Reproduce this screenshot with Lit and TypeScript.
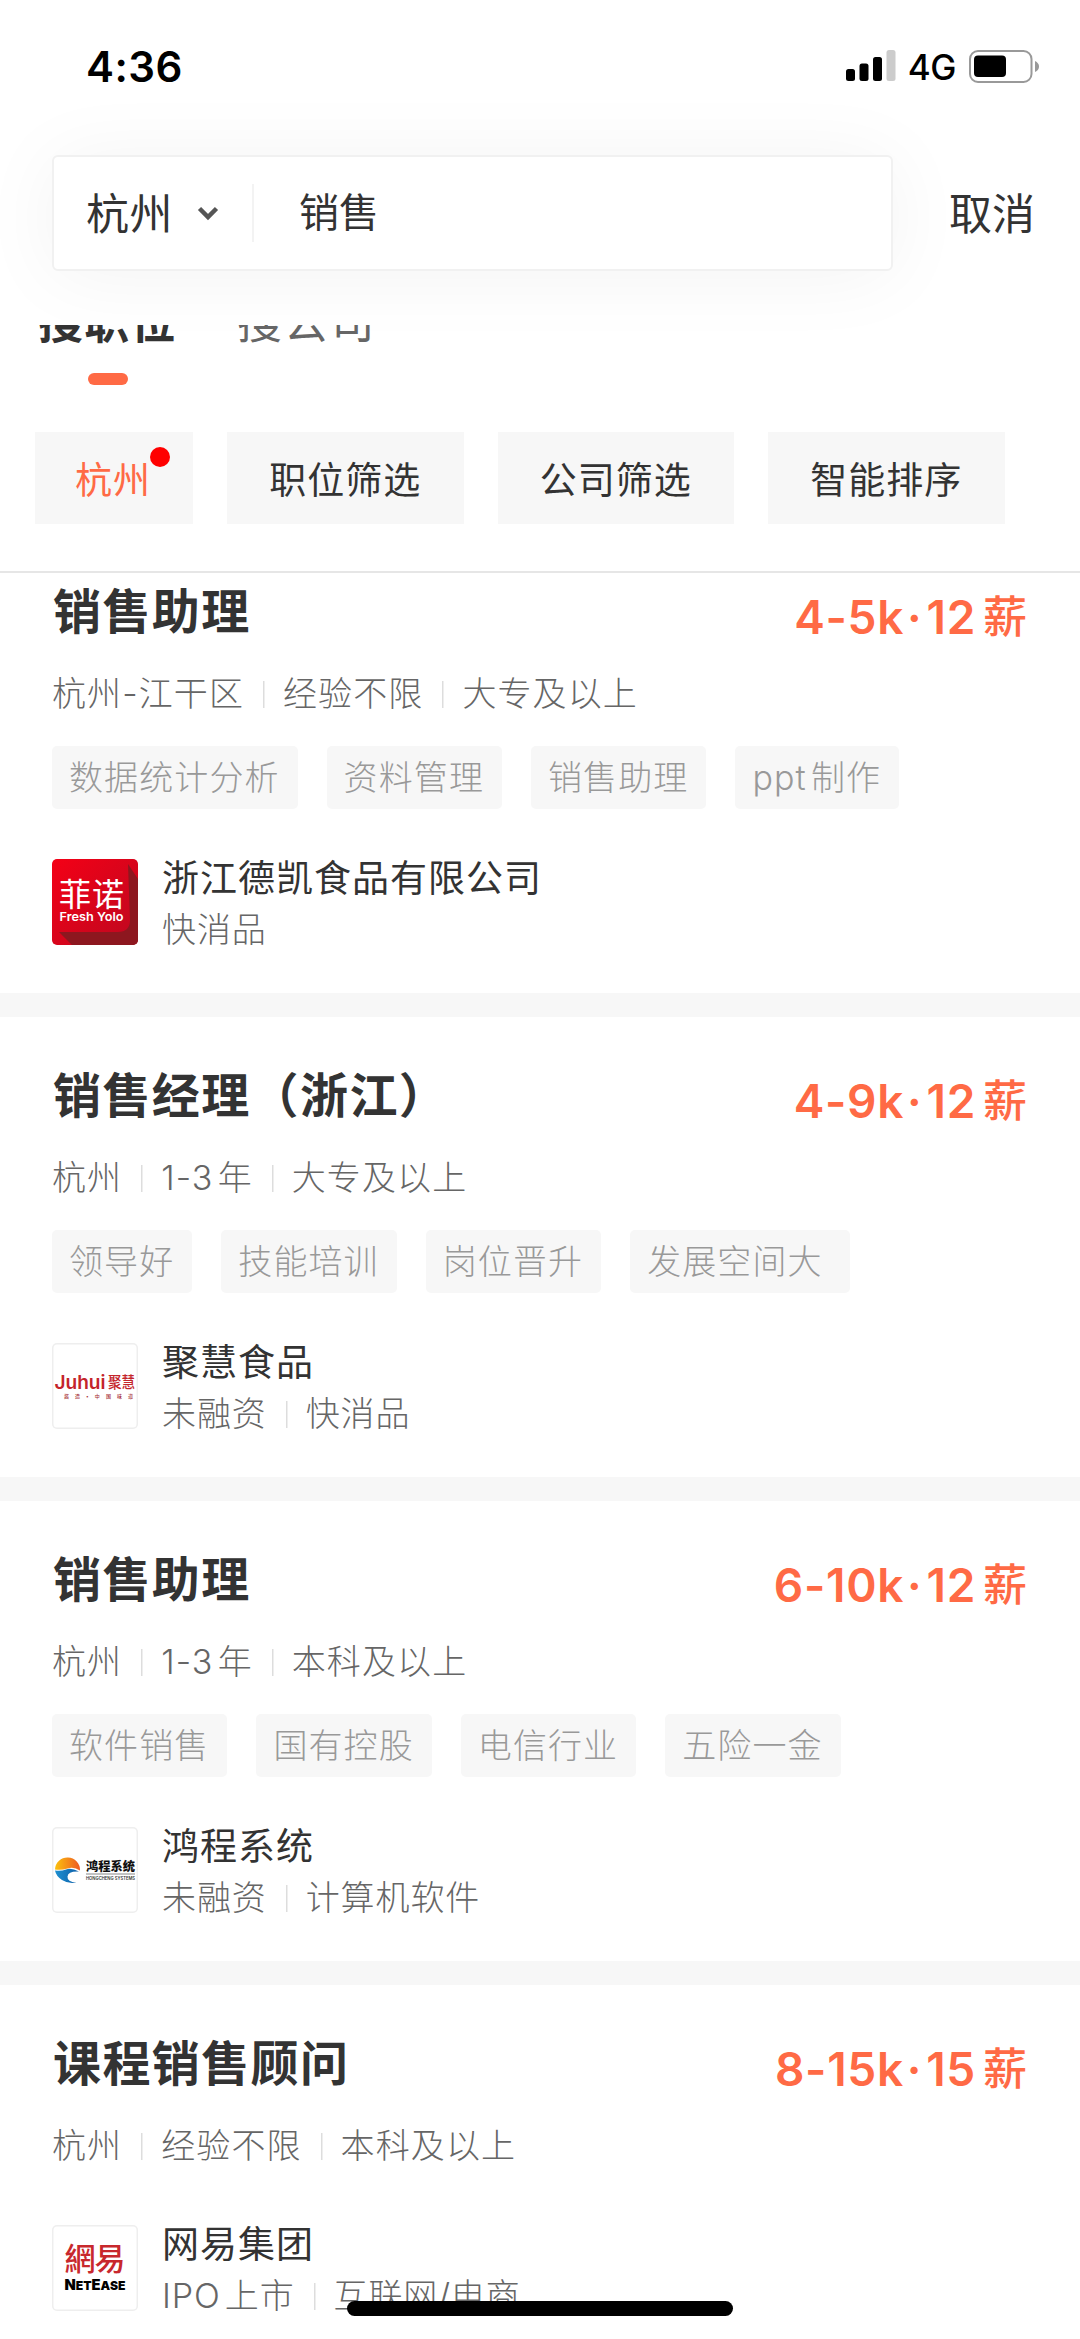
import { LitElement, html, css, svg, nothing } from "lit";
import { customElement, property } from "lit/decorators.js";

interface Job {
  title: string;
  pay: string;
  months: string;
  meta: string[];
  tags: string[];
  company: string;
  info: string[];
  logo: "fresh" | "juhui" | "hongcheng" | "netease";
}

const JOBS: Job[] = [
  { title: "销售助理", pay: "4-5k", months: "12", meta: ["杭州-江干区", "经验不限", "大专及以上"], tags: ["数据统计分析", "资料管理", "销售助理", "ppt 制作"], company: "浙江德凯食品有限公司", info: ["快消品"], logo: "fresh" },
  { title: "销售经理（浙江）", pay: "4-9k", months: "12", meta: ["杭州", "1-3 年", "大专及以上"], tags: ["领导好", "技能培训", "岗位晋升", "发展空间大"], company: "聚慧食品", info: ["未融资", "快消品"], logo: "juhui" },
  { title: "销售助理", pay: "6-10k", months: "12", meta: ["杭州", "1-3 年", "本科及以上"], tags: ["软件销售", "国有控股", "电信行业", "五险一金"], company: "鸿程系统", info: ["未融资", "计算机软件"], logo: "hongcheng" },
  { title: "课程销售顾问", pay: "8-15k", months: "15", meta: ["杭州", "经验不限", "本科及以上"], tags: [], company: "网易集团", info: ["IPO 上市", "互联网/电商"], logo: "netease" },
];

const LOGOS = {
  fresh: svg`
    <defs><linearGradient id="red" x1="0" y1="0" x2="1" y2="1"><stop offset="0" stop-color="#f40016"/><stop offset="1" stop-color="#bd0820"/></linearGradient></defs>
    <rect width="86" height="86" rx="4" fill="url(#red)"/>
    <path d="M76 5 86 20V82a4 4 0 0 1-4 4H20L7 73H66q12 0 12-12Z" fill="#8d171f"/>
    <text x="7" y="46.500" font-size="32" textLength="65" fill="#fff">菲诺</text>
    <text x="7.500" y="61.500" font-size="12" font-weight="600" textLength="64" lengthAdjust="spacingAndGlyphs" fill="#fff">Fresh Yolo</text>`,
  juhui: svg`
    <text x="2.500" y="45.500" font-size="18.500" font-weight="600" textLength="51" lengthAdjust="spacingAndGlyphs" fill="#c4242b">Juhui</text>
    <text x="56" y="45" font-size="15.500" font-weight="500" textLength="27" lengthAdjust="spacingAndGlyphs" fill="#c4242b">聚慧</text>
    <text x="12" y="54.500" font-size="5" font-weight="500" textLength="69" fill="#a8323a">酱造•中国味道</text>`,
  hongcheng: svg`
    <defs><linearGradient id="sun"><stop offset="0" stop-color="#fbc10d"/><stop offset="1" stop-color="#ee5a24"/></linearGradient>
    <linearGradient id="sea"><stop offset="0" stop-color="#1d8fd0"/><stop offset="1" stop-color="#0d5ea8"/></linearGradient></defs>
    <path d="M3 42.500A12.500 12.500 0 0 1 28 43.500Q22 39.500 15.500 41.500T3 42.500Z" fill="url(#sun)"/>
    <path d="M3 43.500Q9 44.500 14 42.500T27 44.500Q16 44 15.500 49.500T24.500 55.500Q16 57 10 53T3 43.500Z" fill="url(#sea)"/>
    <text x="34" y="43.500" font-size="12.500" font-weight="900" textLength="49" lengthAdjust="spacingAndGlyphs" fill="#111">鸿程系统</text>
    <path d="M34 47H83" stroke="#555" stroke-width=".7"/>
    <text x="34" y="52.500" font-size="4.500" font-weight="600" textLength="49" lengthAdjust="spacingAndGlyphs" fill="#333">HONGCHENG SYSTEMS</text>`,
  netease: svg`
    <text x="12.500" y="45" font-size="31" font-weight="500" textLength="61" fill="#c8282d">網易</text>
    <text x="12.500" y="65" font-size="14.500" font-weight="900" textLength="61" lengthAdjust="spacingAndGlyphs" fill="#000">N<tspan font-size="12">ET</tspan>E<tspan font-size="12">ASE</tspan></text>`,
};

@customElement("job-card")
class JobCard extends LitElement {
  @property({ attribute: false }) job!: Job;

  static styles = css`
    :host { display: block; background: #fff; padding: 50px 53px 48px 52px; border-bottom: 24px solid #f7f7f7; }
    .head { display: flex; justify-content: space-between; height: 58px; align-items: center; }
    .title { font-size: 48px; font-weight: 600; letter-spacing: 1.400px; color: #333; line-height: 58px; padding-left: 1px; }
    .pay { display: flex; align-items: center; font-size: 46px; font-weight: 600; letter-spacing: 0.7px; color: #ff6a45; line-height: 58px; padding-top: 9px; }
    .sep { margin: 0 4px 0 3px; }
    .pay .unit { font-size: 44px; font-weight: 500; letter-spacing: 0; margin-left: 7px; }
    .row { display: flex; align-items: center; font-weight: 300; font-size: 34px; letter-spacing: 1.100px; word-spacing: -6.500px; color: #666; line-height: 42px; white-space: nowrap; }
    .meta { margin-top: 32px; }
    .item + .item { margin-left: 19px; padding-left: 20px; background: linear-gradient(#ddd, #ddd) 0 50% / 1.500px 27px no-repeat; }
    .tags { display: flex; gap: 29px; margin-top: 31px; }
    .tag { height: 63px; line-height: 63px; padding: 0 18px 0 17px; border-radius: 5px; background: #f7f7f7; color: #999; font-size: 34px; font-weight: 300; letter-spacing: 1.100px; word-spacing: -6.500px; white-space: nowrap; }
    .long { padding-right: 27px; }
    .firm { display: flex; gap: 24px; margin-top: 50px; height: 86px; }
    .flat { margin-top: 58px; }
    .logo { width: 86px; height: 86px; flex: none; box-sizing: border-box; border-radius: 5px; overflow: hidden; box-shadow: inset 0 0 0 1.500px #eee; }
    .logo svg { display: block; }
    .name { font-size: 37px; letter-spacing: 1px; line-height: 40px; color: #333; font-weight: 400; }
    .info { line-height: 40px; margin-top: 11px; letter-spacing: 0.9px; }
  `;

  render() {
    const j = this.job;
    return html`
      <div class="head"><span class="title">${j.title}</span><span class="pay"><span>${j.pay}</span><span class="sep">·</span><span>${j.months}</span><span class="unit">薪</span></span></div>
      <div class="row meta">${j.meta.map((m) => html`<span class="item">${m}</span>`)}</div>
      ${j.tags.length ? html`<div class="tags">${j.tags.map((t) => html`<span class="tag ${t.length === 5 ? "long" : ""}">${t}</span>`)}</div>` : nothing}
      <div class="firm ${j.tags.length ? "" : "flat"}">
        <div class="logo"><svg width="86" height="86" viewBox="0 0 86 86">${LOGOS[j.logo]}</svg></div>
        <div><div class="name">${j.company}</div><div class="row info">${j.info.map((m) => html`<span class="item">${m}</span>`)}</div></div>
      </div>`;
  }
}

@customElement("app-root")
class AppRoot extends LitElement {
  static styles = css`
    :host { display: flex; flex-direction: column; position: relative; width: 1080px; height: 2339px; overflow: hidden; background: #fff; color: #333; font-family: Inter, "Noto Sans CJK SC", sans-serif; }
    .status { display: flex; justify-content: space-between; align-items: center; height: 132px; flex: none; padding: 0 40px 0 86px; box-sizing: border-box; color: #000; }
    .time { font-size: 42px; font-weight: 600; letter-spacing: 0.5px; }
    .signals { display: flex; align-items: center; }
    .net { font-size: 35px; font-weight: 500; margin: 2px 13px 0 12px; letter-spacing: -0.5px; }
    .searchbar { display: flex; align-items: center; height: 193px; flex: none; padding: 0 45px 31px 52px; box-sizing: border-box; justify-content: space-between; }
    .box { display: flex; align-items: center; width: 841px; height: 116px; box-sizing: border-box; border: 2px solid #f1f1f1; border-radius: 6px; background: #fff; box-shadow: 0 4px 80px rgba(0, 0, 0, 0.05); padding-left: 32px; }
    .city { font-size: 43px; letter-spacing: 0.5px; padding-bottom: 5px; }
    .chev { margin: 0 32px 0 23px; }
    .bar { width: 2px; height: 58px; background: #f3f3f3; }
    .query { font-size: 40px; margin-left: 45px; padding-bottom: 6px; }
    .cancel { font-size: 43px; padding-bottom: 5px; }
    .tabs { height: 107px; flex: none; overflow: hidden; padding-left: 38px; box-sizing: border-box; z-index: 1; }
    .tabrow { display: flex; gap: 60px; font-size: 45px; line-height: 60px; margin-top: -32px; letter-spacing: 1.300px; }
    .tab { display: flex; flex-direction: column; align-items: center; color: #666; }
    .on { color: #333; font-weight: 600; }
    .mark { width: 40px; height: 12px; border-radius: 6px; background: #ff6a45; margin: 20px 0 0 1px; }
    .chips { display: flex; gap: 34px; padding: 0 35px 47px; height: 92px; flex: none; border-bottom: 2px solid #e6e6e6; }
    .chip { display: flex; align-items: center; justify-content: center; position: relative; box-sizing: border-box; width: 236.500px; height: 92px; background: #f7f7f7; font-size: 37px; letter-spacing: 1px; }
    .near { width: 158px; color: #ff6a45; padding-right: 2px; }
    .dot { position: absolute; left: 115px; top: 15px; width: 20px; height: 20px; border-radius: 50%; background: #f00; }
    .list { flex: 1; min-height: 0; overflow: hidden; }
    .shift { margin-top: -40px; }
    .home { position: absolute; left: 347px; top: 2301px; width: 386px; height: 15px; border-radius: 8px; background: #000; }
  `;

  render() {
    return html`
      <div class="status">
        <span class="time">4:36</span>
        <div class="signals">
          <svg width="50" height="32" viewBox="0 0 50 32"><rect x="0" y="19" width="9" height="12" rx="2.500"/><rect x="13.500" y="13.500" width="9" height="17.500" rx="2.500"/><rect x="27" y="7" width="9" height="24" rx="2.500"/><rect x="40.500" y="0" width="9" height="31" rx="2.500" fill="#ccc"/></svg>
          <span class="net">4G</span>
          <svg width="71" height="33" viewBox="0 0 71 33"><rect x="1" y="1" width="61.500" height="31" rx="8" fill="none" stroke="#999" stroke-width="2"/><rect x="5" y="5.500" width="32" height="21.500" rx="4"/><path d="M66 11q4 2 4 5.500T66 22Z" fill="#999"/></svg>
        </div>
      </div>
      <div class="searchbar">
        <div class="box">
          <span class="city">杭州</span>
          <svg class="chev" width="24" height="16" viewBox="0 0 24 16"><path d="m3.500 3.500 8.500 8.500 8.500-8.500" fill="none" stroke="#555" stroke-width="4.500"/></svg>
          <i class="bar"></i><span class="query">销售</span>
        </div>
        <span class="cancel">取消</span>
      </div>
      <div class="tabs"><div class="tabrow">
        <div class="tab on"><span>搜职位</span><i class="mark"></i></div>
        <div class="tab"><span>搜公司</span></div>
      </div></div>
      <div class="chips">
        <span class="chip near">杭州<i class="dot"></i></span>
        <span class="chip">职位筛选</span><span class="chip">公司筛选</span><span class="chip">智能排序</span>
      </div>
      <div class="list"><div class="shift">${JOBS.map((j) => html`<job-card .job=${j}></job-card>`)}</div></div>
      <div class="home"></div>`;
  }
}
